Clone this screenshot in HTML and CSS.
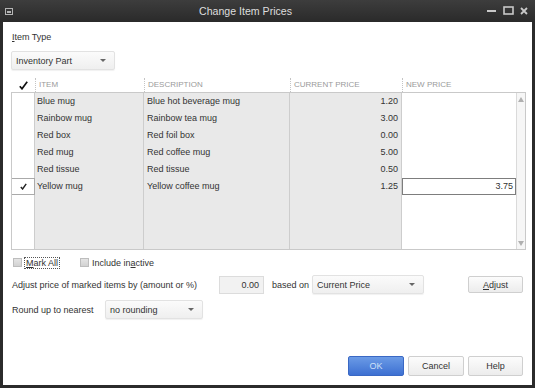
FILE: index.html
```html
<!DOCTYPE html>
<html lang="en">
<head>
    <meta charset="UTF-8">
    <meta name="viewport" content="width=device-width, initial-scale=1.0">
    <title>Change Item Prices</title>
    <link rel="stylesheet" href="styles.css">
</head>
<body>
    <div class="window">
        <div class="titlebar">
            <svg class="sys-icon" width="8" height="7" viewBox="0 0 8 7">
                <rect x="0.5" y="0.5" width="7" height="6" fill="none" stroke="#b5b5b5"/>
                <rect x="2" y="3" width="4" height="2" fill="#b5b5b5"/>
            </svg>
            <span class="title">Change Item Prices</span>
            <div class="controls">
                <svg width="10" height="10" viewBox="0 0 10 10"><rect x="0" y="4" width="9" height="2" fill="#c8c8c8"/></svg>
                <svg width="11" height="10" viewBox="0 0 11 10"><rect x="1" y="1" width="9" height="7" fill="none" stroke="#c8c8c8" stroke-width="1.6"/></svg>
                <svg width="8" height="10" viewBox="0 0 8 10"><path d="M1 2 L7 8 M7 2 L1 8" stroke="#c8c8c8" stroke-width="1.8"/></svg>
            </div>
        </div>

        <div class="main">
            <div class="field-label"><u>I</u>tem Type</div>
            <div class="select select-type"><span>Inventory Part</span><i class="caret"></i></div>

            <div class="grid-head">
                <div class="h-check">
                    <svg width="9" height="9" viewBox="0 0 9 9"><path d="M0.8 5.2 L3 7.8 L8.2 0.8" fill="none" stroke="#111" stroke-width="1.7"/></svg>
                </div>
                <div class="h-cell">Item</div>
                <div class="h-cell">Description</div>
                <div class="h-cell">Current Price</div>
                <div class="h-cell">New Price</div>
            </div>

            <div class="grid-body">
                <div class="cell c-check"></div>
                <div class="cell c-item">Blue mug</div>
                <div class="cell c-desc">Blue hot beverage mug</div>
                <div class="cell c-cur">1.20</div>
                <div class="cell c-new"></div>

                <div class="cell c-check"></div>
                <div class="cell c-item">Rainbow mug</div>
                <div class="cell c-desc">Rainbow tea mug</div>
                <div class="cell c-cur">3.00</div>
                <div class="cell c-new"></div>

                <div class="cell c-check"></div>
                <div class="cell c-item">Red box</div>
                <div class="cell c-desc">Red foil box</div>
                <div class="cell c-cur">0.00</div>
                <div class="cell c-new"></div>

                <div class="cell c-check"></div>
                <div class="cell c-item">Red mug</div>
                <div class="cell c-desc">Red coffee mug</div>
                <div class="cell c-cur">5.00</div>
                <div class="cell c-new"></div>

                <div class="cell c-check"></div>
                <div class="cell c-item">Red tissue</div>
                <div class="cell c-desc">Red tissue</div>
                <div class="cell c-cur">0.50</div>
                <div class="cell c-new"></div>

                <div class="cell c-check marked">
                    <svg width="7" height="7" viewBox="0 0 7 7"><path d="M0.8 4 L2.6 6 L6.2 0.8" fill="none" stroke="#222" stroke-width="1.4"/></svg>
                </div>
                <div class="cell c-item">Yellow mug</div>
                <div class="cell c-desc">Yellow coffee mug</div>
                <div class="cell c-cur">1.25</div>
                <div class="cell c-new editing">3.75</div>

                <div class="cell c-check"></div>
                <div class="cell c-item"></div>
                <div class="cell c-desc"></div>
                <div class="cell c-cur"></div>
                <div class="cell c-new"></div>

                <div class="scrollbar">
                    <i class="arrow-up"></i>
                    <i class="arrow-down"></i>
                </div>
            </div>

            <div class="check-row">
                <span class="checkbox"></span>
                <span class="focus-label"><u>M</u>ark All</span>
                <span class="checkbox checkbox-gap"></span>
                <span class="check-label">Include in<u>a</u>ctive</span>
            </div>

            <div class="adjust-row">
                <span class="adjust-label">Adjust price of marked items by (amount or %)</span>
                <div class="amount">0.00</div>
                <span class="based-label">based on</span>
                <div class="select select-base"><span>Current Price</span><i class="caret"></i></div>
                <button class="btn btn-adjust"><u>A</u>djust</button>
            </div>

            <div class="round-row">
                <span class="round-label">Round up to nearest</span>
                <div class="select select-round"><span>no rounding</span><i class="caret"></i></div>
            </div>

            <div class="buttons">
                <button class="btn btn-primary">OK</button>
                <button class="btn">Cancel</button>
                <button class="btn btn-help">Help</button>
            </div>
        </div>
    </div>
</body>
</html>
```

FILE: styles.css
```css
body {
    margin: 0;
    width: 535px;
    height: 388px;
    overflow: hidden;
    font-family: "Liberation Sans", Arial, sans-serif;
}
.window {
    width: 535px;
    height: 388px;
    display: flex;
    flex-direction: column;
    background-color: #2b2b2b;
    font-size: 9px;
    color: #333;
}
.titlebar {
    height: 22px;
    display: flex;
    align-items: center;
    padding: 0 7px 0 5px;
    background: linear-gradient(#3d3d3d, #2a2a2a);
    color: #dedede;
}
.sys-icon {
    margin-top: 1px;
}
.title {
    margin-left: 186px;
    font-size: 10.6px;
}
.controls {
    margin-left: auto;
    display: flex;
    align-items: center;
    gap: 6px;
}
.main {
    flex: 1;
    margin: 0 3px 3px;
    background-color: #fff;
    display: flex;
    flex-direction: column;
    padding: 9px 6px 9px 8px;
}
.field-label {
    line-height: 12px;
    padding-left: 1px;
}
.select {
    height: 19px;
    box-sizing: border-box;
    display: flex;
    align-items: center;
    padding: 0 8px 0 4px;
    background: linear-gradient(#fbfbfb, #efefef);
    border: 1px solid #e2e2e2;
    border-radius: 2px;
    box-shadow: 0 1px 1px rgba(0,0,0,0.06);
}
.caret {
    margin-left: auto;
    width: 0;
    height: 0;
    border-left: 3px solid transparent;
    border-right: 3px solid transparent;
    border-top: 3px solid #666;
}
.select-type {
    margin-top: 8px;
    width: 104px;
}

/* item grid */
.grid-head {
    margin-top: 8px;
    height: 14px;
    display: grid;
    grid-template-columns: 23px 109px 146px 112px 114px;
    padding-left: 1px;
}
.h-check {
    display: flex;
    align-items: center;
    justify-content: center;
}
.h-cell {
    border-left: 1px dotted #c4c4c4;
    padding-left: 3px;
    line-height: 14px;
    font-size: 8px;
    color: #9a9a9a;
    text-transform: uppercase;
}
.grid-body {
    height: 158px;
    box-sizing: border-box;
    border: 1px solid #c9c9c9;
    display: grid;
    grid-template-columns: 23px 109px 146px 112px 114px 9px;
    grid-template-rows: repeat(6, 17px) 1fr;
}
.cell {
    box-sizing: border-box;
    border-right: 1px solid #cdcdcd;
    line-height: 17px;
    padding: 0 3px;
    white-space: nowrap;
}
.c-check {
    background-color: #fff;
    display: flex;
    align-items: center;
    justify-content: center;
}
.c-item, .c-desc, .c-cur {
    background-color: #e9e9e9;
}
.c-item {
    padding-left: 2px;
}
.c-cur {
    text-align: right;
}
.c-new {
    background-color: #fff;
    text-align: right;
    border-right: none;
}
.marked {
    border: 1px solid #aaa;
    border-left: none;
}
.editing {
    border: 1px solid #7d7d7d;
    line-height: 15px;
    padding-right: 2px;
}
.scrollbar {
    grid-column: 6;
    grid-row: 1 / -1;
    background-color: #f6f6f6;
    border-left: 1px solid #dadada;
    display: flex;
    flex-direction: column;
    align-items: center;
    justify-content: space-between;
    padding: 4px 0 3px;
}
.arrow-up, .arrow-down {
    width: 0;
    height: 0;
    border-left: 3px solid transparent;
    border-right: 3px solid transparent;
}
.arrow-up {
    border-bottom: 5px solid #b0b0b0;
}
.arrow-down {
    border-top: 5px solid #b0b0b0;
}

/* options */
.check-row {
    margin-top: 7px;
    height: 11px;
    display: flex;
    align-items: center;
}
.checkbox {
    width: 9px;
    height: 9px;
    box-sizing: border-box;
    margin-left: 2px;
    background: linear-gradient(#e4e4e4, #d2d2d2);
    border: 1px solid #bdbdbd;
}
.checkbox-gap {
    margin-left: 20px;
}
.focus-label {
    margin-left: 2px;
    border: 1px dotted #555;
    padding: 0 1px;
    line-height: 10px;
}
.check-label {
    margin-left: 3px;
}
.adjust-row {
    margin-top: 7px;
    height: 19px;
    display: flex;
    align-items: center;
    padding-right: 3px;
}
.adjust-label {
    width: 208px;
    padding-left: 1px;
    box-sizing: border-box;
}
.amount {
    width: 45px;
    height: 18px;
    box-sizing: border-box;
    background-color: #f2f2f2;
    border: 1px solid #dcdcdc;
    text-align: right;
    line-height: 16px;
    padding-right: 4px;
}
.based-label {
    width: 40px;
    margin-left: 8px;
}
.select-base {
    width: 112px;
}
.btn {
    font-family: inherit;
    font-size: 9px;
    color: #333;
    height: 17px;
    width: 55px;
    padding: 0;
    background: linear-gradient(#fcfcfc, #ececec);
    border: 1px solid #cfcfcf;
    border-radius: 2px;
}
.btn-adjust {
    margin-left: auto;
}
.round-row {
    margin-top: 6px;
    height: 19px;
    display: flex;
    align-items: center;
}
.round-label {
    width: 94px;
    padding-left: 1px;
    box-sizing: border-box;
}
.select-round {
    width: 98px;
}
.buttons {
    margin-top: auto;
    display: flex;
    justify-content: flex-end;
    gap: 4px;
    padding-right: 3px;
}
.buttons .btn {
    height: 20px;
    width: 56px;
}
.buttons .btn-help {
    width: 55px;
}
.btn-primary {
    background: linear-gradient(#6b9be6, #3d70d2);
    border-color: #3a68c4;
    color: #cfe0f7;
}
```
